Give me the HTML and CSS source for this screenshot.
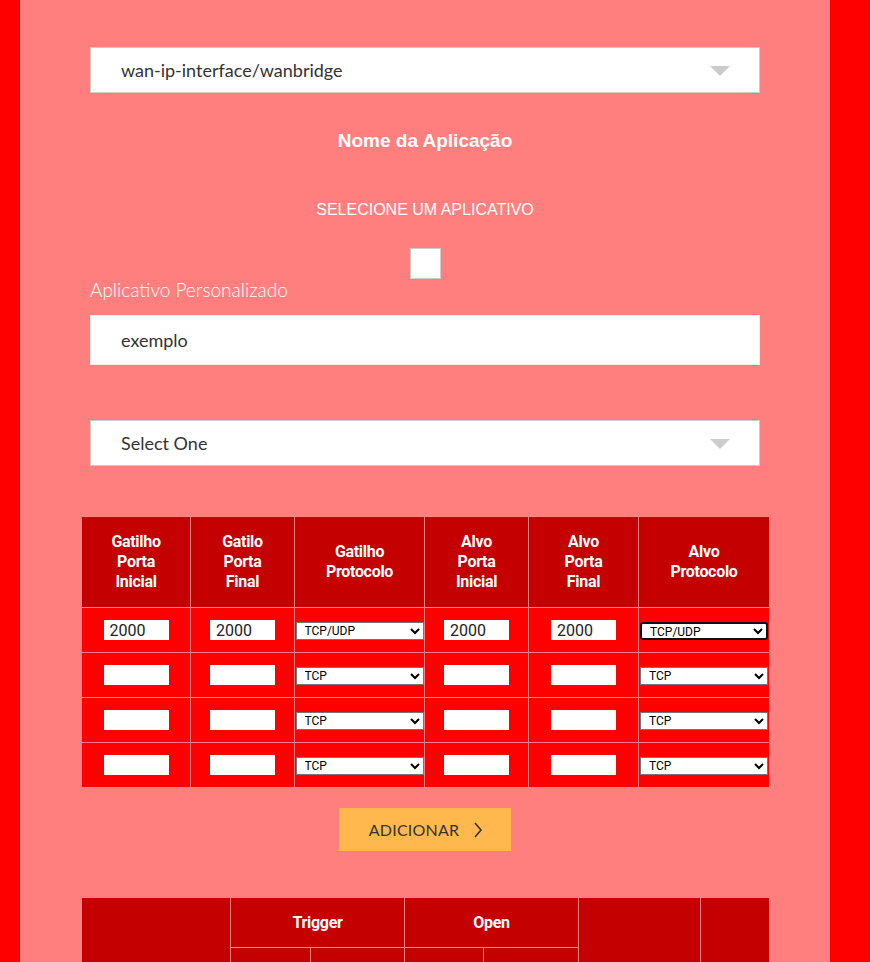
FILE: index.html
```html
<!DOCTYPE html>
<html lang="pt">
<head>
<meta charset="utf-8">
<title>Port Triggering</title>
<link rel="stylesheet" href="styles.css">
</head>
<body>
<div class="page">
  <div class="form">
    <div class="dropdown">
      <span class="dropdown-text">wan-ip-interface/wanbridge</span>
      <svg class="caret" width="20" height="10" viewBox="0 0 20 10"><polygon points="0,0 20,0 10,10" fill="#cccccc"/></svg>
    </div>
    <h2 class="title">Nome da Aplicação</h2>
    <p class="subtitle">SELECIONE UM APLICATIVO</p>
    <div class="check-row"><span class="checkbox"></span></div>
    <label class="field-label">Aplicativo Personalizado</label>
    <input class="text-input" type="text" value="exemplo">
    <div class="dropdown dropdown-second">
      <span class="dropdown-text">Select One</span>
      <svg class="caret" width="20" height="10" viewBox="0 0 20 10"><polygon points="0,0 20,0 10,10" fill="#cccccc"/></svg>
    </div>
  </div>

  <table class="rules">
    <colgroup>
      <col style="width:109px"><col style="width:104px"><col style="width:130px"><col style="width:104px"><col style="width:110px"><col style="width:131px">
    </colgroup>
    <thead>
      <tr>
        <th>Gatilho<br>Porta<br>Inicial</th>
        <th>Gatilo<br>Porta<br>Final</th>
        <th>Gatilho<br>Protocolo</th>
        <th>Alvo<br>Porta<br>Inicial</th>
        <th>Alvo<br>Porta<br>Final</th>
        <th>Alvo<br>Protocolo</th>
      </tr>
    </thead>
    <tbody>
      <tr>
        <td><input class="port" type="text" value="2000"></td>
        <td><input class="port" type="text" value="2000"></td>
        <td class="sel"><select class="proto"><option>TCP/UDP</option><option>TCP</option><option>UDP</option></select></td>
        <td><input class="port" type="text" value="2000"></td>
        <td><input class="port" type="text" value="2000"></td>
        <td class="sel"><select class="proto focused"><option>TCP/UDP</option><option>TCP</option><option>UDP</option></select></td>
      </tr>
      <tr>
        <td><input class="port" type="text"></td>
        <td><input class="port" type="text"></td>
        <td class="sel"><select class="proto"><option>TCP</option><option>UDP</option><option>TCP/UDP</option></select></td>
        <td><input class="port" type="text"></td>
        <td><input class="port" type="text"></td>
        <td class="sel"><select class="proto"><option>TCP</option><option>UDP</option><option>TCP/UDP</option></select></td>
      </tr>
      <tr>
        <td><input class="port" type="text"></td>
        <td><input class="port" type="text"></td>
        <td class="sel"><select class="proto"><option>TCP</option><option>UDP</option><option>TCP/UDP</option></select></td>
        <td><input class="port" type="text"></td>
        <td><input class="port" type="text"></td>
        <td class="sel"><select class="proto"><option>TCP</option><option>UDP</option><option>TCP/UDP</option></select></td>
      </tr>
      <tr>
        <td><input class="port" type="text"></td>
        <td><input class="port" type="text"></td>
        <td class="sel"><select class="proto"><option>TCP</option><option>UDP</option><option>TCP/UDP</option></select></td>
        <td><input class="port" type="text"></td>
        <td><input class="port" type="text"></td>
        <td class="sel"><select class="proto"><option>TCP</option><option>UDP</option><option>TCP/UDP</option></select></td>
      </tr>
    </tbody>
  </table>

  <div class="actions">
    <button class="add-btn" type="button">ADICIONAR
      <svg class="chev" width="10" height="16" viewBox="0 0 10 16"><polyline points="2,1 8,8 2,15" fill="none" stroke="#333333" stroke-width="1.6"/></svg>
    </button>
  </div>

  <table class="list">
    <colgroup>
      <col style="width:149px"><col style="width:80px"><col style="width:94px"><col style="width:79px"><col style="width:95px"><col style="width:122px"><col style="width:69px">
    </colgroup>
    <thead>
      <tr class="list-top">
        <th rowspan="2"></th>
        <th colspan="2">Trigger</th>
        <th colspan="2">Open</th>
        <th rowspan="2"></th>
        <th rowspan="2"></th>
      </tr>
      <tr class="list-sub">
        <th></th><th></th><th></th><th></th>
      </tr>
    </thead>
  </table>
</div>
</body>
</html>
```

FILE: styles.css
```css
html, body {
  margin: 0;
  padding: 0;
}
body {
  background: #ff0000;
  overflow: hidden;
}
.page {
  margin-left: 20px;
  width: 810px;
  min-height: 1200px;
  background: #ff7f7f;
  box-sizing: border-box;
  padding: 47px 61px 0 61px;
}
.form {
  margin: 0 9px;
  width: 670px;
}
.dropdown {
  box-sizing: border-box;
  height: 46px;
  background: #ffffff;
  border: 1px solid #cccccc;
  display: flex;
  align-items: center;
  justify-content: space-between;
  padding: 0 29px 0 30px;
}
.dropdown-text {
  font-family: "Lato", sans-serif;
  font-size: 18px;
  color: #333333;
}
.caret {
  display: block;
  margin-top: 2px;
}
.title {
  margin: 37px 0 0;
  text-align: center;
  font-family: "Liberation Sans", Arial, sans-serif;
  font-weight: bold;
  font-size: 19px;
  line-height: 22px;
  color: #ffffff;
}
.subtitle {
  margin: 48px 0 0;
  text-align: center;
  font-family: "Liberation Sans", Arial, sans-serif;
  font-size: 16px;
  line-height: 20px;
  color: #ffffff;
}
.check-row {
  margin-top: 28px;
  display: flex;
  justify-content: center;
}
.checkbox {
  display: block;
  width: 29px;
  height: 29px;
  background: #ffffff;
  border: 1px solid #cccccc;
}
.field-label {
  display: block;
  font-family: "Lato", sans-serif;
  font-weight: 300;
  font-size: 19px;
  line-height: 22px;
  color: #ffffff;
}
.text-input {
  display: block;
  box-sizing: border-box;
  margin-top: 14px;
  width: 670px;
  height: 50px;
  border: 1px solid #eeeeee;
  background: #ffffff;
  padding: 0 30px;
  font-family: "Lato", sans-serif;
  font-size: 18px;
  color: #333333;
  outline: none;
}
.dropdown-second {
  margin-top: 55px;
}
.rules {
  margin-top: 50px;
  width: 688px;
  border-collapse: collapse;
  table-layout: fixed;
}
.rules th, .rules td {
  border: 1px solid #ff8080;
  padding: 0;
  text-align: center;
  vertical-align: middle;
}
.rules th {
  background: #c40000;
  height: 90px;
  font-family: "Roboto", sans-serif;
  font-weight: bold;
  font-size: 16px;
  line-height: 20px;
  color: #ffffff;
  letter-spacing: -0.3px;
}
.rules td {
  background: #ff0000;
  height: 44px;
}
.port {
  box-sizing: border-box;
  width: 65px;
  height: 20px;
  border: 1px solid #ffffff;
  background: #ffffff;
  padding: 0 5px;
  font-family: "Roboto", sans-serif;
  font-size: 16px;
  color: #222222;
  outline: none;
  vertical-align: middle;
}
.proto {
  box-sizing: border-box;
  width: 128px;
  height: 18px;
  font-family: "Roboto", sans-serif;
  font-size: 12px;
  color: #000000;
  background: #ffffff;
  border: 1px solid #767676;
  vertical-align: middle;
  padding: 0 0 0 4px;
}
.proto.focused {
  border: 2px solid #101010;
  border-radius: 3px;
}
.actions {
  margin-top: 20px;
  display: flex;
  justify-content: center;
}
.add-btn {
  box-sizing: border-box;
  width: 172px;
  height: 43px;
  background: #ffb84d;
  border: none;
  display: flex;
  align-items: center;
  justify-content: center;
  gap: 14px;
  font-family: "Lato", sans-serif;
  font-size: 16px;
  letter-spacing: 0.2px;
  color: #333333;
  padding: 0 0 0 2px;
}
.chev {
  display: block;
}
.list {
  margin-top: 46px;
  width: 688px;
  border-collapse: collapse;
  table-layout: fixed;
}
.list th {
  background: #c40000;
  border: 1px solid #ff8080;
  padding: 0;
  font-family: "Roboto", sans-serif;
  font-weight: bold;
  font-size: 16px;
  color: #ffffff;
  letter-spacing: -0.3px;
}
.list-top th {
  height: 49px;
}
.list-sub th {
  height: 49px;
}
```
